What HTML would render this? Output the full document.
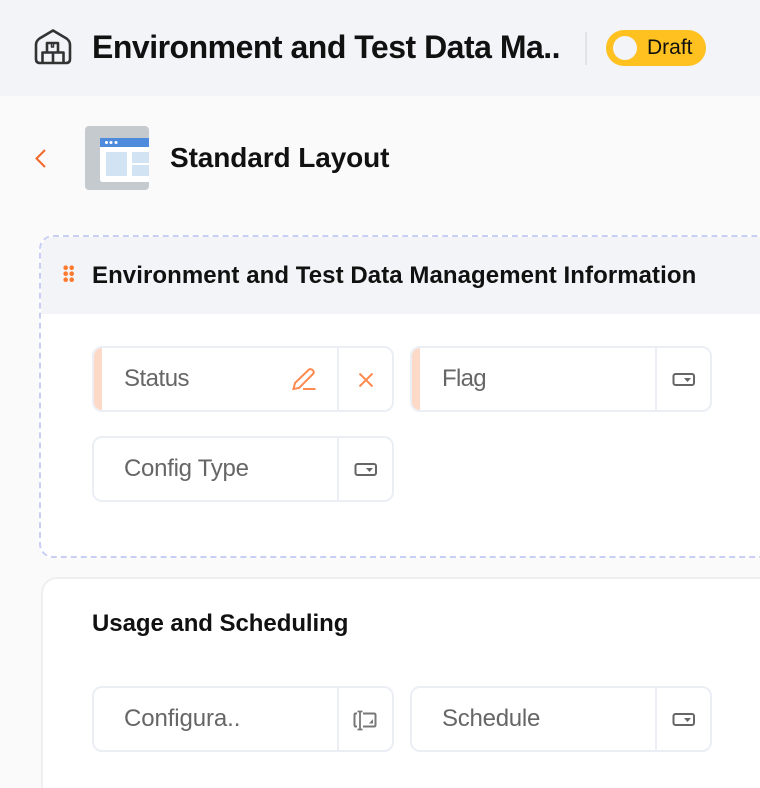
<!DOCTYPE html>
<html lang="en">
<head>
<meta charset="utf-8">
<title>Standard Layout</title>
<style>
*{box-sizing:border-box;margin:0;padding:0}
html,body{width:760px;height:788px;overflow:hidden;background:#fafafa;font-family:"Liberation Sans",sans-serif}
.page{position:relative;width:760px;height:788px;overflow:hidden;background:#fafafa}
.abs,.t{position:absolute}
.t{white-space:nowrap;line-height:1}
.hdr{position:absolute;left:0;top:0;width:760px;height:96px;background:#f3f4f8}
.sep{position:absolute;left:585px;top:32px;width:2px;height:33px;background:#e2e3e6}
.pill{position:absolute;left:606px;top:30px;width:100px;height:36px;border-radius:18px;background:#fec11f}
.knob{position:absolute;left:7px;top:6px;width:24px;height:24px;border-radius:50%;background:#f3f4f8}
.s1{position:absolute;left:39px;top:235px;width:780px;height:323px;border:2px dashed #c9cff4;border-radius:14px;background:#fff;overflow:hidden}
.s1h{position:absolute;left:0;top:0;right:0;height:77px;background:#f3f4f8}
.s2{position:absolute;left:41px;top:577px;width:780px;height:240px;border:2px solid #efefef;border-radius:16px;background:#fff}
.f{position:absolute;width:302px;height:66px;border:2px solid #ebeff5;border-radius:10px;background:#fff;overflow:hidden}
.f i{position:absolute;left:243px;top:0;width:2px;height:62px;background:#ebeff5}
.f b{position:absolute;left:0;top:0;width:8px;height:62px;background:#fdd9c8}
.l{font-size:24px;color:#666}
.h{font-weight:bold;font-size:24px;color:#111}
</style>
</head>
<body>
<div class="page">
<div class="hdr"></div>
<svg class="abs" style="left:30px;top:24px" width="48" height="48" viewBox="30 24 48 48" fill="none" stroke="#333" stroke-width="2.600" stroke-linejoin="round">
<path d="M53 30.500 L66.500 38.500 Q70 41 70 45 V59 Q70 63 66 63 H40 Q36 63 36 59 V45 Q36 41 39.500 38.500 Z"/>
<path d="M47 52.500 V43 H58 V52.500 M42.500 63 V52.500 H53 V63 M53 52.500 H63.500 V63"/>
<path d="M51.500 43 V47 H53.500 V43" stroke-width="1.500"/>
</svg>
<div class="t" style="left:92px;top:31px;font-size:32px;font-weight:bold;color:#111;letter-spacing:-.5px">Environment and Test Data Ma..</div>
<div class="sep"></div>
<div class="pill"><div class="knob"></div></div>
<div class="t" style="left:647px;top:37px;font-size:21px;color:#111">Draft</div>

<svg class="abs" style="left:30px;top:144px" width="20" height="28" viewBox="30 144 20 28" fill="none"><path d="M45 150 L36.500 158.500 L45 167" stroke="#f2662b" stroke-width="2"/></svg>
<svg class="abs" style="left:85px;top:126px" width="65" height="64" viewBox="85 126 65 64">
<rect x="85" y="126" width="64" height="64" rx="4" fill="#c5cacf"/>
<path d="M100 138 H149 V182 H103 Q100 182 100 179 Z" fill="#fff"/>
<rect x="100" y="138" width="49" height="9" fill="#4f8bdc"/>
<circle cx="106.500" cy="142.500" r="1.500" fill="#fff"/><circle cx="111" cy="142.500" r="1.500" fill="#fff"/><circle cx="116" cy="142.500" r="1.500" fill="#fff"/>
<rect x="106" y="152" width="21" height="24" fill="#d2e3f3"/>
<rect x="132" y="152" width="17" height="11" fill="#d2e3f3"/>
<rect x="132" y="165" width="17" height="11" fill="#d2e3f3"/>
</svg>
<div class="t" style="left:170px;top:144px;font-size:28px;font-weight:bold;color:#111;letter-spacing:-.1px">Standard Layout</div>

<div class="s1"><div class="s1h"></div></div>
<svg class="abs" style="left:60px;top:262px" width="20" height="24" viewBox="60 262 20 24" fill="#ff7a2f">
<circle cx="65.700" cy="267.700" r="2.300"/><circle cx="71.700" cy="267.700" r="2.300"/>
<circle cx="65.700" cy="273.700" r="2.300"/><circle cx="71.700" cy="273.700" r="2.300"/>
<circle cx="65.700" cy="279.700" r="2.300"/><circle cx="71.700" cy="279.700" r="2.300"/>
</svg>
<div class="t h" style="left:92px;top:264px;letter-spacing:.07px">Environment and Test Data Management Information</div>

<div class="f" style="left:92px;top:346px"><b></b><i></i></div>
<div class="t l" style="left:124px;top:367px;letter-spacing:-.5px">Status</div>
<svg class="abs" style="left:290px;top:366px" width="28" height="26" viewBox="290 366 28 26" fill="none" stroke="#ff8a50" stroke-width="2">
<path d="M293.500 389 L295 383 L309 369.500 Q311 368.500 313 370.500 Q314.500 372.500 313 374 L299 388 Z"/>
<path d="M303 389 H315.500"/>
</svg>
<svg class="abs" style="left:356px;top:370px" width="20" height="20" viewBox="356 370 20 20" fill="none" stroke="#ff8a50" stroke-width="2"><path d="M359.500 373.500 L372.500 386.500 M372.500 373.500 L359.500 386.500"/></svg>

<div class="f" style="left:410px;top:346px"><b></b><i></i></div>
<div class="t l" style="left:442px;top:367px;letter-spacing:-.7px">Flag</div>
<svg class="abs" style="left:670px;top:370px" width="28" height="18" viewBox="670 370 28 18"><rect x="673.500" y="374" width="20.500" height="11" rx="2" fill="none" stroke="#666" stroke-width="2"/><path d="M684 378 H691 L687.500 382 Z" fill="#666"/></svg>

<div class="f" style="left:92px;top:436px"><i></i></div>
<div class="t l" style="left:124px;top:457px;letter-spacing:-.27px">Config Type</div>
<svg class="abs" style="left:352px;top:460px" width="28" height="18" viewBox="670 370 28 18"><rect x="673.500" y="374" width="20.500" height="11" rx="2" fill="none" stroke="#666" stroke-width="2"/><path d="M684 378 H691 L687.500 382 Z" fill="#666"/></svg>

<div class="s2"></div>
<div class="t h" style="left:92px;top:612px;letter-spacing:-.05px">Usage and Scheduling</div>

<div class="f" style="left:92px;top:686px"><i></i></div>
<div class="t l" style="left:124px;top:707px;letter-spacing:-.1px">Configura..</div>
<svg class="abs" style="left:350px;top:708px" width="30" height="24" viewBox="350 708 30 24" fill="none" stroke="#777" stroke-width="2">
<path d="M357 713.500 H355.500 Q354.500 713.500 354.500 715 V725 Q354.500 726.500 355.500 726.500 H357 M363 713.500 H374 Q375.500 713.500 375.500 715 V725 Q375.500 726.500 374 726.500 H363"/>
<path d="M357.500 711.500 H362.500 M360 711.500 V729.500 M357.500 729.500 H362.500" stroke-width="1.800"/>
<path d="M373 719 V723.500 H369 Z" fill="#777" stroke="none"/>
</svg>

<div class="f" style="left:410px;top:686px"><i></i></div>
<div class="t l" style="left:442px;top:707px;letter-spacing:-.25px">Schedule</div>
<svg class="abs" style="left:670px;top:710px" width="28" height="18" viewBox="670 370 28 18"><rect x="673.500" y="374" width="20.500" height="11" rx="2" fill="none" stroke="#666" stroke-width="2"/><path d="M684 378 H691 L687.500 382 Z" fill="#666"/></svg>
</div>
</body>
</html>
